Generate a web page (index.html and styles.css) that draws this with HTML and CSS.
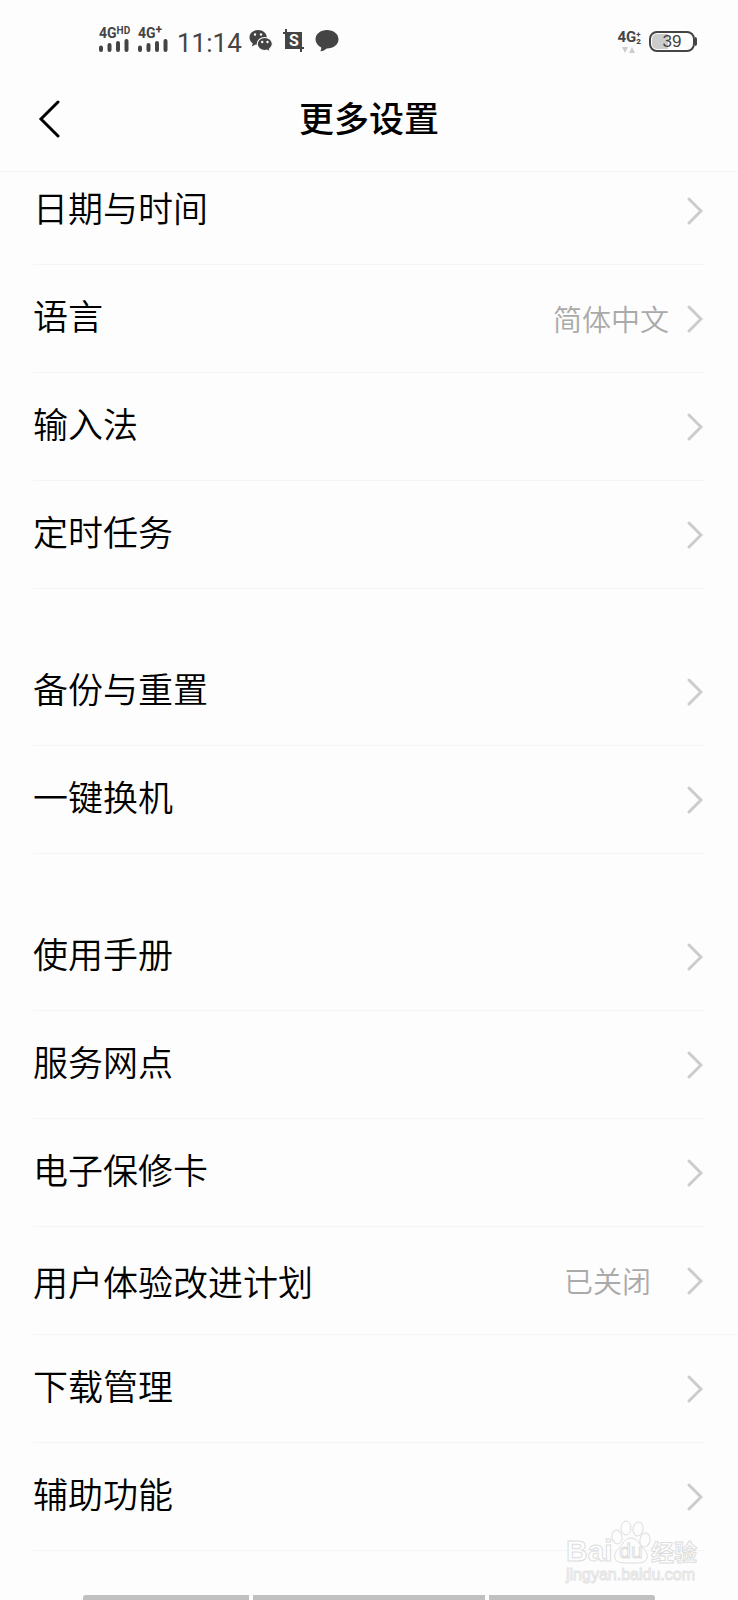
FILE: index.html
```html
<!DOCTYPE html>
<html lang="zh-CN">

<head>
    <meta charset="UTF-8" />
    <meta name="viewport" content="width=device-width, initial-scale=1.0" />
    <title>更多设置</title>
    <link rel="stylesheet" href="styles.css">
</head>

<body>
    <div class="status-bar">
        <div class="status-left">
            <div class="signal">
                <span class="network">4G<sup>HD</sup></span>
                <svg width="30" height="13" viewBox="0 0 30 13">
                    <path d="M2 8.500v2.500M10.500 6v5M19 4v7M27.500 2v9" />
                </svg>
            </div>
            <div class="signal">
                <span class="network">4G<sup class="plus">+</sup></span>
                <svg width="30" height="13" viewBox="0 0 30 13">
                    <path d="M2 8.500v2.500M10.500 6v5M19 4v7M27.500 2v9" />
                </svg>
            </div>
            <span class="time">11:14</span>
            <div class="notices">
                <svg width="24" height="24" viewBox="0 0 24 24">
                    <path fill="#444" d="M9 1C4 1 .5 4.300.5 8.500c0 2.500 1.200 4.500 3.200 5.800L3 17.500l3.500-1.900c.8.2 1.600.3 2.500.3 5 0 8.800-3.200 8.800-7.400S14 1 9 1z" />
                    <path fill="#444" stroke="#fdfdfd" stroke-width="1.200" d="M15.800 8.500c-4.300 0-7.600 2.900-7.600 6.500s3.300 6.500 7.600 6.500c.8 0 1.500-.1 2.200-.3l3.200 1.800-.7-3c1.800-1.200 2.900-3 2.900-5 0-3.600-3.300-6.500-7.600-6.500z" />
                    <g fill="#fdfdfd">
                        <circle cx="6" cy="5.500" r="1.200" />
                        <circle cx="12" cy="5.500" r="1.200" />
                        <circle cx="13.200" cy="13" r="1.200" />
                        <circle cx="18.500" cy="13" r="1.200" />
                    </g>
                </svg>
                <svg width="24" height="24" viewBox="0 0 24 24">
                    <path fill="#444" d="M4 4h16v16H4z" />
                    <path fill="none" stroke="#444" stroke-width="2" d="M4 0v19h18M1 4h18v19" />
                    <text class="crop-letter" x="12" y="17" text-anchor="middle">S</text>
                </svg>
                <svg width="24" height="24" viewBox="0 0 24 24">
                    <path fill="#444" d="M12 1C5.500 1 .5 5 .5 10.300c0 3.700 2.300 6.500 5.700 8.100.2 1.400-.2 2.700-1 3.900 2.700-.3 4.800-1.300 6.500-2.900 6.800.1 11.800-3.600 11.800-9.100C23.500 5 18.500 1 12 1z" />
                </svg>
            </div>
        </div>
        <div class="status-right">
            <div class="data">
                <span class="network">4G<span class="sim"><b>+</b><b>2</b></span></span>
                <svg width="14" height="6" viewBox="0 0 14 6">
                    <path fill="#ccc" d="M0 0h6L3 6zM7 6h6l-3-6z" />
                </svg>
            </div>
            <div class="battery"><span>39</span></div>
        </div>
    </div>

    <header class="title-bar">
        <button class="back" type="button" aria-label="返回">
            <svg width="22" height="38" viewBox="0 0 22 38">
                <path d="M20 2L3 19l17 17" />
            </svg>
        </button>
        <h1>更多设置</h1>
    </header>

    <main class="settings">
        <ul class="group">
            <li><a class="row" href="#"><span class="label">日期与时间</span></a></li>
            <li><a class="row" href="#"><span class="label">语言</span><span class="value">简体中文</span></a></li>
            <li><a class="row" href="#"><span class="label">输入法</span></a></li>
            <li><a class="row" href="#"><span class="label">定时任务</span></a></li>
        </ul>
        <ul class="group">
            <li><a class="row" href="#"><span class="label">备份与重置</span></a></li>
            <li><a class="row" href="#"><span class="label">一键换机</span></a></li>
        </ul>
        <ul class="group">
            <li><a class="row" href="#"><span class="label">使用手册</span></a></li>
            <li><a class="row" href="#"><span class="label">服务网点</span></a></li>
            <li><a class="row" href="#"><span class="label">电子保修卡</span></a></li>
            <li class="wide"><a class="row" href="#"><span class="label">用户体验改进计划</span><span class="value">已关闭</span></a></li>
            <li><a class="row" href="#"><span class="label">下载管理</span></a></li>
            <li><a class="row" href="#"><span class="label">辅助功能</span></a></li>
        </ul>
    </main>

    <div class="gesture-bar">
        <span></span>
        <span class="middle"></span>
        <span></span>
    </div>

    <svg class="watermark" width="138" height="66" viewBox="0 0 138 66">
        <text class="brand" x="2" y="41">Bai</text>
        <g class="paw">
            <ellipse cx="53" cy="17" rx="5" ry="7" transform="rotate(-12 53 17)" />
            <ellipse cx="62" cy="8" rx="5" ry="7" />
            <ellipse cx="74" cy="9" rx="5" ry="7" transform="rotate(10 74 9)" />
            <ellipse cx="81" cy="20" rx="5" ry="7" transform="rotate(12 81 20)" />
            <path d="M67 18c-6 0-8 6-12 10-3 3-5 6-4 10 1 5 6 5 16 5s15 0 16-5c1-4-1-7-4-10-4-4-6-10-12-10z" />
        </g>
        <text class="du" x="67" y="38" text-anchor="middle">du</text>
        <text class="cn" x="87" y="41">经验</text>
        <text class="site" x="2" y="60">jingyan.baidu.com</text>
    </svg>

    <script>
        // every row ends with the same arrow
        document.querySelectorAll(".row").forEach((row) => {
            row.insertAdjacentHTML("beforeend",
                `<svg class="arrow" width="16" height="28" viewBox="0 0 16 28"><path d="M2 2l12 12L2 26" /></svg>`);
        });
    </script>
</body>

</html>
```

FILE: styles.css
```css
* {
    box-sizing: border-box;
}

body {
    position: relative;
    display: flex;
    flex-direction: column;
    min-height: 100vh;
    margin: 0;
    background-color: #fdfdfd;
    color: #000;
    font-family: "Noto Sans CJK SC", sans-serif;
}

.status-bar {
    display: flex;
    justify-content: space-between;
    height: 72px;
    padding: 26px 43px 0 99px;
    color: #444;
    font-family: Roboto, sans-serif;
}

.status-left,
.status-right,
.notices {
    display: flex;
    align-items: flex-start;
}

.signal {
    display: flex;
    flex-direction: column;
    width: 39px;
}

.signal path {
    fill: none;
    stroke: #444;
    stroke-width: 4;
    stroke-linecap: round;
}

.network {
    display: flex;
    height: 13px;
    font-size: 14px;
    font-weight: 700;
    line-height: 14px;
}

.network sup {
    font-size: 10px;
    line-height: 9px;
}

.network .plus {
    font-size: 12px;
}

.time {
    margin-right: 7px;
    font-size: 26px;
    line-height: 34px;
}

.notices {
    gap: 9px;
    padding-top: 3px;
}

.crop-letter {
    fill: #fdfdfd;
    font-size: 16px;
    font-weight: 700;
}

.status-right {
    gap: 8px;
    padding-top: 5px;
}

.data {
    display: flex;
    flex-direction: column;
    align-items: center;
    gap: 3px;
}

.data .network {
    font-size: 15px;
    line-height: 13px;
}

.sim {
    display: flex;
    flex-direction: column;
    font-size: 8px;
    line-height: 7px;
}

.battery {
    position: relative;
    width: 46px;
    height: 21px;
    padding: 1px;
    border: 2px solid #444;
    border-radius: 8px;
    background: linear-gradient(to right, #ccc 39%, #fdfdfd 39%) content-box;
    font-family: "Liberation Sans", sans-serif;
    font-size: 17px;
    line-height: 16px;
    text-align: center;
}

.battery::after {
    content: "";
    position: absolute;
    top: 4px;
    right: -4px;
    width: 2px;
    height: 9px;
    border-radius: 0 3px 3px 0;
    background-color: #444;
}

.title-bar {
    display: grid;
    grid-template-columns: 1fr auto 1fr;
    align-items: center;
    height: 100px;
    padding: 0 34px 6px;
    border-bottom: 1px solid #f5f5f5;
}

.title-bar h1 {
    margin: 0;
    padding-bottom: 3px;
    font-size: 35px;
    font-weight: 500;
    line-height: 48px;
}

.back {
    display: flex;
    justify-self: start;
    padding: 0 4px;
    border: none;
    background: none;
    cursor: pointer;
}

.back path {
    fill: none;
    stroke: #000;
    stroke-width: 3;
    stroke-linecap: round;
}

/* the list is scrolled a little way under the title bar */
.settings {
    margin-top: -15px;
}

.group {
    margin: 0;
    padding: 0 0 0 33px;
    list-style: none;
}

.group + .group {
    margin-top: 49px;
}

.group li {
    margin-right: 33px;
    border-bottom: 1px solid #f5f5f5;
}

.group .wide {
    margin-right: 0;
    padding-right: 33px;
}

.row {
    display: flex;
    align-items: center;
    height: 107px;
    padding-right: 2px;
    color: #000;
    font-size: 35px;
    font-weight: 350;
    line-height: 48px;
    text-decoration: none;
}

.label {
    padding-bottom: 7px;
}

.wide .label {
    padding-bottom: 0;
}

.value {
    margin-left: auto;
    padding-bottom: 2px;
    color: #aaa;
    font-size: 29px;
}

.wide .value {
    margin-right: 18px;
}

.arrow {
    margin-left: auto;
}

.value + .arrow {
    margin-left: 18px;
}

.arrow path {
    fill: none;
    stroke: #ccc;
    stroke-width: 3;
    stroke-linecap: round;
}

.gesture-bar {
    display: flex;
    gap: 4px;
    margin-top: auto;
    padding: 0 83px;
}

.gesture-bar span {
    flex: 5;
    height: 5px;
    background-color: #c0c0c0;
}

.gesture-bar .middle {
    flex: 7;
}

.gesture-bar span:first-child {
    border-top-left-radius: 3px;
}

.gesture-bar span:last-child {
    border-top-right-radius: 3px;
}

.watermark {
    position: absolute;
    right: 36px;
    bottom: 14px;
    fill: #fdfdfd;
    stroke: #ddd;
    stroke-width: 1;
    font-family: "Liberation Sans", sans-serif;
}

.brand {
    font-size: 30px;
    font-weight: 700;
}

.du {
    font-size: 21px;
}

.cn {
    font-family: "Noto Sans CJK SC", sans-serif;
    font-size: 23px;
    font-weight: 700;
}

.site {
    font-size: 16px;
    stroke: #e4e4e4;
}
```
